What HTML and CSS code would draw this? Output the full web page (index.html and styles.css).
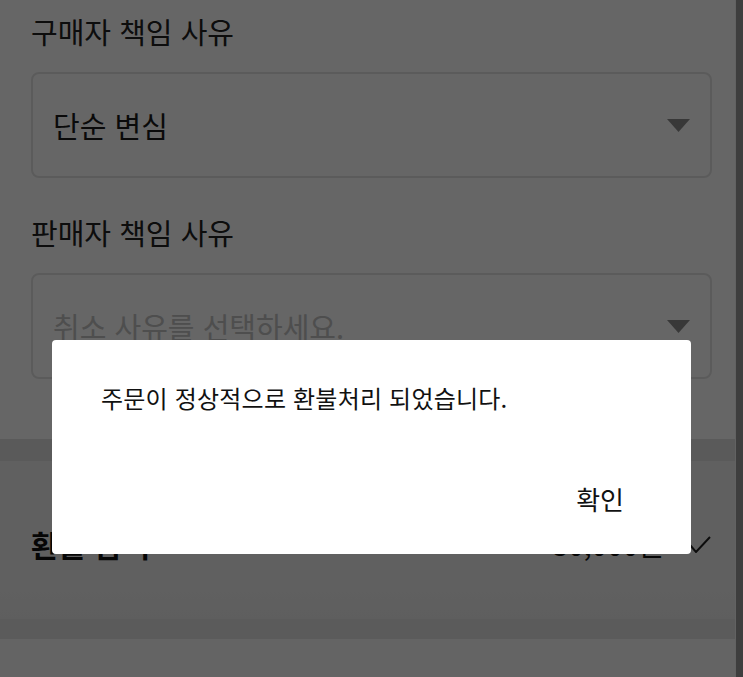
FILE: index.html
```html
<!DOCTYPE html>
<html lang="ko">

<head>
    <meta charset="UTF-8">
    <meta name="viewport" content="width=device-width, initial-scale=1.0">
    <link rel="stylesheet" href="styles.css">
    <title>환불 신청</title>
</head>

<body>

    <div class="page">
        <div class="form">
            <h3 class="field-label">구매자 책임 사유</h3>
            <div class="select">
                <span class="select-value">단순 변심</span>
                <svg class="select-arrow" width="23" height="13" viewBox="0 0 23 13"><polygon points="0,0 23,0 11.5,13" /></svg>
            </div>

            <h3 class="field-label second">판매자 책임 사유</h3>
            <div class="select">
                <span class="select-value placeholder">취소 사유를 선택하세요.</span>
                <svg class="select-arrow" width="23" height="13" viewBox="0 0 23 13"><polygon points="0,0 23,0 11.5,13" /></svg>
            </div>
        </div>

        <div class="band"></div>

        <div class="summary">
            <div class="summary-row">
                <span class="summary-title">환불 금액</span>
                <span class="summary-amount">30,000원</span>
                <svg class="summary-check" width="22" height="17" viewBox="0 0 22 17"><polyline points="1,9 7,16 21,1" /></svg>
            </div>
        </div>

        <div class="band bottom"></div>
        <div class="rest"></div>
    </div>

    <div class="scrollbar"></div>

    <div class="overlay">
        <div class="dialog">
            <p class="dialog-message">주문이 정상적으로 환불처리 되었습니다.</p>
            <div class="dialog-actions">
                <button class="dialog-btn">확인</button>
            </div>
        </div>
    </div>

</body>

</html>
```

FILE: styles.css
```css
body {
    margin: 0;
    padding: 0;
    background-color: #fff;
    font-family: "Noto Sans CJK KR", "Noto Sans", sans-serif;
    color: #222;
    display: flex;
    height: 677px;
    overflow: hidden;
}

.page {
    flex: 1;
    display: flex;
    flex-direction: column;
}

.form {
    padding: 12px 23px 0 31px;
}

.field-label {
    margin: 0;
    font-size: 29px;
    font-weight: 400;
    line-height: 38px;
}

.field-label.second {
    margin-top: 35px;
}

.select {
    margin-top: 22px;
    height: 106px;
    box-sizing: border-box;
    border: 2px solid #e4e4e4;
    border-radius: 8px;
    display: flex;
    align-items: center;
    justify-content: space-between;
    padding: 0 20px 0 20px;
}

.select-value {
    font-size: 29px;
    color: #1a1a1a;
}

.select-value.placeholder {
    color: #c2c2c2;
}

.select-arrow polygon {
    fill: #8c8c8c;
}

.band {
    margin-top: 60px;
    height: 22px;
    background-color: #e2e2e2;
}

.summary {
    height: 158px;
    background: linear-gradient(#f1f1f1 70%, #ececec);
    padding: 0 24px 0 31px;
}

.summary-row {
    display: flex;
    align-items: center;
    height: 166px;
}

.summary-title {
    font-size: 30px;
    font-weight: 700;
    color: #111;
    flex: 1;
}

.summary-amount {
    font-size: 28px;
    color: #111;
    margin-right: 25px;
}

.summary-check polyline {
    fill: none;
    stroke: #222;
    stroke-width: 2;
}

.band.bottom {
    margin-top: 0;
    height: 20px;
    background-color: #e4e4e4;
}

.rest {
    flex: 1;
    background-color: #fafafa;
}

.scrollbar {
    width: 7px;
    background-color: #9c9c9c;
    border-left: 1px solid #f6f6f6;
}

.overlay {
    position: fixed;
    top: 0;
    left: 0;
    width: 100%;
    height: 100%;
    background-color: rgba(0, 0, 0, 0.6);
    display: flex;
    justify-content: center;
    align-items: flex-start;
    padding-top: 340px;
    box-sizing: border-box;
}

.dialog {
    width: 639px;
    height: 214px;
    box-sizing: border-box;
    background-color: #fff;
    border-radius: 4px;
    padding: 43px 49px 0;
}

.dialog-message {
    margin: 0;
    font-size: 24px;
    line-height: 30px;
    letter-spacing: 0.2px;
    color: #111;
}

.dialog-actions {
    display: flex;
    justify-content: flex-end;
    margin-top: 71px;
}

.dialog-btn {
    border: none;
    background: none;
    padding: 0;
    margin-right: 18px;
    font-family: inherit;
    font-size: 26px;
    line-height: 30px;
    color: #111;
    cursor: pointer;
}
```
